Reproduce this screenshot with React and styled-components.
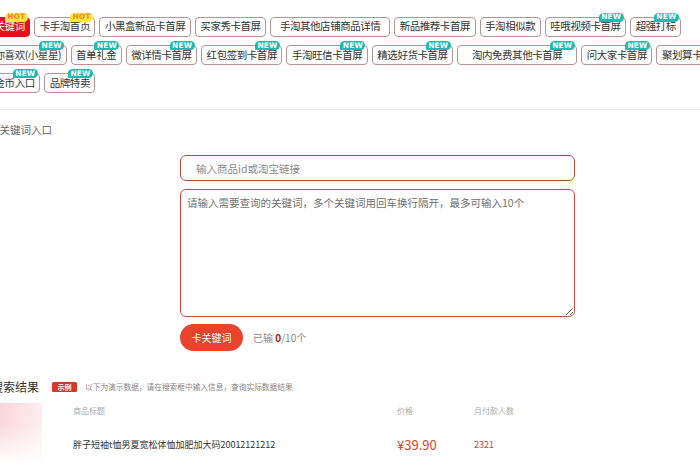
import styled, { createGlobalStyle } from 'styled-components';

const GlobalStyle = createGlobalStyle`
  html, body {
    margin: 0;
    background: #fff;
    overflow: hidden;
  }
  body {
    font-family: "Noto Sans CJK SC", "Microsoft YaHei", sans-serif;
    color: #333;
  }
`;

const Page = styled.div`
  width: 760px;
  margin-left: -21px;
`;

const TagArea = styled.div`
  display: flex;
  flex-direction: column;
  gap: 8.3px;
  padding: 16.5px 0 15.5px;
  border-bottom: 1px solid #ececec;
`;

const TagRow = styled.div`
  display: flex;
  gap: 4px;
  white-space: nowrap;
`;

const Tag = styled.span`
  position: relative;
  box-sizing: border-box;
  flex-shrink: 0;
  display: inline-flex;
  align-items: center;
  justify-content: center;
  height: 20px;
  min-width: ${(p) => (p.$wide ? '120px' : '0')};
  padding: 0 4.5px;
  border: 1px solid ${(p) => (p.$active ? '#e3101b' : '#b99494')};
  border-radius: 4px;
  background: ${(p) => (p.$active ? '#e8101c' : '#fff')};
  color: ${(p) => (p.$active ? '#fff' : '#333')};
  font-size: 10.5px;
  letter-spacing: -0.45px;
  line-height: 1;
`;

const Badge = styled.span`
  position: absolute;
  top: -5px;
  right: 1.5px;
  height: 9px;
  padding: 0 2.5px;
  display: flex;
  align-items: center;
  border-radius: 5px 5px 5px 1px;
  background: ${(p) => (p.$hot ? '#ffe83a' : '#1fb9b1')};
  color: ${(p) => (p.$hot ? '#f08a1c' : '#fff')};
  font-family: "DejaVu Sans", sans-serif;
  font-size: 7.5px;
  font-weight: 700;
  letter-spacing: 0.1px;
`;

const SectionLabel = styled.div`
  margin: 13px 0 0 10px;
  font-size: 10.5px;
  line-height: 14px;
  color: #666;
`;

const Form = styled.div`
  display: flex;
  flex-direction: column;
  padding-left: 201px;
  margin-top: 18.5px;
`;

const LinkInput = styled.input`
  box-sizing: border-box;
  width: 395px;
  height: 26px;
  padding: 0 15px;
  border: 1.5px solid #b9483b;
  border-radius: 6px;
  outline: none;
  font-family: inherit;
  font-size: 10.5px;
  color: #333;
  &::placeholder { color: #8a8a8a; }
`;

const KeywordBox = styled.textarea`
  box-sizing: border-box;
  width: 395px;
  height: 128px;
  margin-top: 7.5px;
  padding: 6px 6px;
  border: 1.5px solid #cf4b3d;
  border-radius: 6px;
  outline: none;
  resize: vertical;
  font-family: inherit;
  font-size: 10.5px;
  line-height: 14px;
  color: #333;
  &::placeholder { color: #707070; }
`;

const ActionRow = styled.div`
  display: flex;
  align-items: center;
  gap: 10px;
  margin-top: 7px;
`;

const SubmitButton = styled.button`
  width: 63px;
  height: 27px;
  border: none;
  border-radius: 14px;
  background: #e8432d;
  color: #fff;
  font-family: inherit;
  font-size: 10px;
  cursor: pointer;
`;

const Counter = styled.span`
  font-size: 10px;
  color: #888;
  b {
    color: #a3201a;
    font-weight: 700;
  }
`;

const ResultHeader = styled.div`
  display: flex;
  align-items: center;
  margin: 29px 0 0 12px;
  height: 14px;
`;

const ResultTitle = styled.span`
  font-size: 12px;
  color: #333;
`;

const ExampleTag = styled.span`
  margin-left: 13px;
  width: 25px;
  height: 10px;
  display: inline-flex;
  align-items: center;
  justify-content: center;
  border-radius: 1.5px;
  background: #d8362a;
  color: #fff;
  font-size: 7px;
  font-weight: 700;
`;

const DemoNote = styled.span`
  margin-left: 8px;
  font-size: 7.7px;
  color: #888;
`;

const ResultBody = styled.div`
  display: flex;
  margin-top: 9px;
`;

const Thumb = styled.div`
  width: 63px;
  height: 62px;
  flex-shrink: 0;
  background:
    linear-gradient(to bottom, rgba(255, 255, 255, 0) 35%, #fff 100%),
    linear-gradient(100deg, #f7c9ce 0%, #fbe3e6 60%, #fdf2f3 100%);
`;

const Table = styled.div`
  margin-left: 31px;
  display: grid;
  grid-template-columns: 324px 77px auto;
  grid-auto-rows: min-content;
  align-content: start;
`;

const HeadCell = styled.span`
  padding-top: 2px;
  font-size: 8px;
  line-height: 12px;
  color: #aaa;
`;

const Cell = styled.span`
  margin-top: 20px;
  display: flex;
  align-items: center;
  height: 16px;
  font-size: ${(p) => (p.$price ? '13px' : '9px')};
  color: ${(p) => (p.$price ? '#d9432f' : p.$accent ? '#c4483c' : '#333')};
`;

const tagRows = [
  [
    { text: '卡关键词', active: true, badge: 'HOT' },
    { text: '卡手淘首页', badge: 'HOT' },
    { text: '小黑盒新品卡首屏' },
    { text: '买家秀卡首屏' },
    { text: '手淘其他店铺商品详情', wide: true },
    { text: '新品推荐卡首屏' },
    { text: '手淘相似款' },
    { text: '哇哦视频卡首屏', badge: 'NEW' },
    { text: '超强打标', badge: 'NEW' },
  ],
  [
    { text: '猜你喜欢(小星星)', badge: 'NEW' },
    { text: '首单礼金', badge: 'NEW' },
    { text: '微详情卡首屏', badge: 'NEW' },
    { text: '红包签到卡首屏', badge: 'NEW' },
    { text: '手淘旺信卡首屏', badge: 'NEW' },
    { text: '精选好货卡首屏', badge: 'NEW' },
    { text: '淘内免费其他卡首屏', wide: true, badge: 'NEW' },
    { text: '问大家卡首屏', badge: 'NEW' },
    { text: '聚划算卡首屏' },
  ],
  [
    { text: '淘金币入口', badge: 'NEW' },
    { text: '品牌特卖', badge: 'NEW' },
  ],
];

export default function App() {
  return (
    <>
      <GlobalStyle />
      <Page>
        <TagArea>
          {tagRows.map((row, i) => (
            <TagRow key={i}>
              {row.map((t) => (
                <Tag key={t.text} $active={t.active} $wide={t.wide}>
                  {t.text}
                  {t.badge && <Badge $hot={t.badge === 'HOT'}>{t.badge}</Badge>}
                </Tag>
              ))}
            </TagRow>
          ))}
        </TagArea>

        <SectionLabel>卡关键词入口</SectionLabel>

        <Form>
          <LinkInput placeholder="输入商品id或淘宝链接" />
          <KeywordBox placeholder="请输入需要查询的关键词，多个关键词用回车换行隔开，最多可输入10个" />
          <ActionRow>
            <SubmitButton>卡关键词</SubmitButton>
            <Counter>
              已输 <b>0</b>/10个
            </Counter>
          </ActionRow>
        </Form>

        <ResultHeader>
          <ResultTitle>搜索结果</ResultTitle>
          <ExampleTag>示例</ExampleTag>
          <DemoNote>以下为演示数据，请在搜索框中输入信息，查询实际数据结果</DemoNote>
        </ResultHeader>

        <ResultBody>
          <Thumb />
          <Table>
            <HeadCell>商品标题</HeadCell>
            <HeadCell>价格</HeadCell>
            <HeadCell>月付款人数</HeadCell>
            <Cell>胖子短袖t恤男夏宽松体恤加肥加大码20012121212</Cell>
            <Cell $price>¥39.90</Cell>
            <Cell $accent>2321</Cell>
          </Table>
        </ResultBody>
      </Page>
    </>
  );
}
